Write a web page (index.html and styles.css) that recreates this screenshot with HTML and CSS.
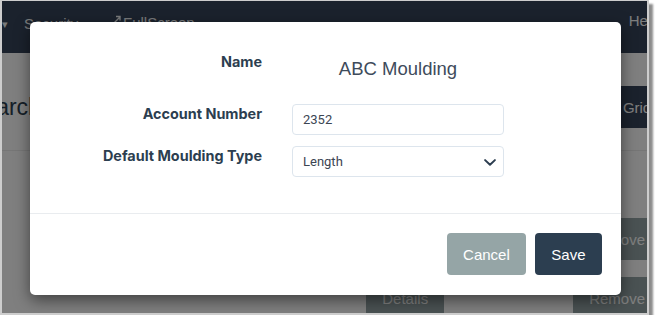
FILE: index.html
```html
<!DOCTYPE html>
<html lang="en">
<head>
<meta charset="utf-8">
<title>Edit Customer</title>
<link rel="stylesheet" href="styles.css">
</head>
<body>
<div class="frame">
  <div class="page">
    <nav class="navbar">
      <span class="nav-item nav-caret">▾</span>
      <span class="nav-item nav-security">Security</span>
      <span class="nav-item nav-full"><svg class="ext-icon" width="8" height="9" viewBox="0 0 8 9"><path d="M1 8 L7 2 M3 1.5 H7 V5.5" fill="none" stroke="currentColor" stroke-width="1.4"/></svg>FullScreen</span>
      <span class="nav-item nav-help">Help</span>
    </nav>
    <div class="toolbar">
      <h1 class="title">Search</h1>
      <button class="bg-btn bg-dark">Grid</button>
    </div>
    <div class="rows">
      <div class="row row-one">
        <button class="bg-btn bg-gray">Remove</button>
      </div>
      <div class="row row-two">
        <button class="bg-btn bg-gray btn-details">Details</button>
        <button class="bg-btn bg-gray">Remove</button>
      </div>
    </div>
    <div class="backdrop">
      <div class="modal">
        <div class="modal-body">
          <div class="label">Name</div>
          <div class="value">ABC Moulding</div>
          <div class="label">Account Number</div>
          <input class="field" type="text" value="2352">
          <div class="label">Default Moulding Type</div>
          <div class="field select">
            <span>Length</span>
            <svg class="chev" width="12" height="7" viewBox="0 0 12 7"><path d="M1.1 1.1 L6 5.8 L10.9 1.1" fill="none" stroke="#2c3e50" stroke-width="2" stroke-linecap="round" stroke-linejoin="round"/></svg>
          </div>
        </div>
        <div class="modal-footer">
          <button class="btn btn-cancel">Cancel</button>
          <button class="btn btn-save">Save</button>
        </div>
      </div>
    </div>
  </div>
</div>
</body>
</html>
```
FILE: styles.css
```css
html, body {
  margin: 0;
  padding: 0;
  background: #ffffff;
}
body {
  font-family: "Liberation Sans", Arial, sans-serif;
}
.frame {
  width: 645px;
  height: 312px;
  border-style: solid;
  border-color: #cdcdcd;
  border-width: 1px 2px 2px 2px;
  box-shadow: 4px 4px 2px rgba(0, 0, 0, 0.45);
  overflow: hidden;
}
.page {
  position: relative;
  width: 645px;
  height: 312px;
  background: #ffffff;
  overflow: hidden;
}
.navbar {
  height: 52px;
  background: #36445a;
  display: flex;
  align-items: flex-start;
  padding-top: 11px;
  box-sizing: border-box;
  color: #f2f4f6;
  font-size: 15px;
  line-height: 18px;
  white-space: nowrap;
}
.nav-item {
  flex-shrink: 0;
}
.nav-caret {
  font-size: 11px;
  width: 22px;
  margin-top: 3px;
}
.nav-security {
  width: 89px;
  margin-top: 3px;
}
.nav-full {
  display: flex;
  align-items: flex-start;
  gap: 2px;
  margin-top: 2px;
}
.ext-icon {
  margin-top: 1px;
}
.nav-help {
  margin-left: 434px;
  color: #fbfcfd;
}
.toolbar {
  display: flex;
  align-items: flex-start;
  height: 42px;
  margin-top: 33px;
  padding-bottom: 22px;
  border-bottom: 1px solid #ededed;
  width: 720px;
}
.title {
  margin: 0 0 0 -34px;
  font-weight: normal;
  font-size: 23px;
  line-height: 42px;
  color: #2c3e50;
}
.bg-btn {
  font-family: "Liberation Sans", Arial, sans-serif;
  font-size: 15px;
  color: #ffffff;
  border: 0;
  border-radius: 4px;
  height: 42px;
  padding: 0 16px;
}
.bg-dark {
  background: #36445a;
  margin-left: 566px;
}
.rows {
  width: 659px;
  display: flex;
  flex-direction: column;
  gap: 17px;
  margin-top: 67px;
}
.row {
  display: flex;
  justify-content: flex-end;
}
.bg-gray {
  background: #95a5a6;
}
.btn-details {
  margin-right: 129px;
}
.backdrop {
  position: absolute;
  inset: 0;
  background: rgba(0, 0, 0, 0.5);
  padding: 21px 0 0 28px;
}
.modal {
  width: 591px;
  height: 273px;
  background: #ffffff;
  border-radius: 5px;
  box-shadow: 0 5px 15px rgba(0, 0, 0, 0.5);
  display: flex;
  flex-direction: column;
}
.modal-body {
  display: grid;
  grid-template-columns: 232px 212px;
  grid-template-rows: 41px 31px 31px;
  column-gap: 30px;
  row-gap: 11px;
  padding: 30px 0 36px;
}
.label {
  text-align: right;
  font-family: Inter, "Liberation Sans", sans-serif;
  font-weight: 700;
  font-size: 14.4px;
  line-height: 20px;
  color: #2c3e50;
}
.value {
  text-align: center;
  font-family: "Liberation Sans", Arial, sans-serif;
  font-size: 18.5px;
  line-height: 22px;
  padding-top: 6px;
  color: #3e4b5b;
}
.field {
  box-sizing: border-box;
  height: 31px;
  width: 212px;
  margin: 0;
  border: 1px solid #dde5ed;
  border-radius: 4px;
  padding: 0 10px;
  font-family: Roboto, "Liberation Sans", sans-serif;
  font-size: 13px;
  color: #3b4552;
  background: #ffffff;
  outline: none;
}
.select {
  display: flex;
  align-items: center;
  justify-content: space-between;
  padding: 0 7px 0 10px;
}
.chev {
  display: block;
  margin-top: 2px;
}
.modal-footer {
  border-top: 1px solid #e9ecef;
  display: flex;
  justify-content: flex-end;
  gap: 9px;
  padding: 19px 19px 20px;
}
.btn {
  font-family: "Liberation Sans", Arial, sans-serif;
  font-size: 15px;
  color: #ffffff;
  border: 0;
  border-radius: 4px;
  height: 42px;
  padding: 0 16px;
}
.btn-cancel {
  background: #95a5a6;
}
.btn-save {
  background: #2c3e50;
  padding: 0 16.5px;
}
```
